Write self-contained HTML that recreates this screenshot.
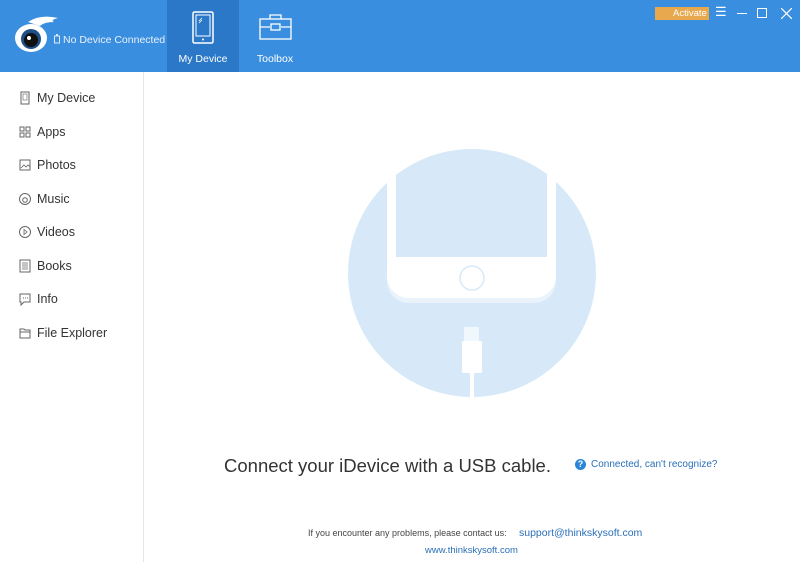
<!DOCTYPE html>
<html><head><style>
*{margin:0;padding:0;box-sizing:border-box}
body{width:800px;height:562px;overflow:hidden;background:#fff;font-family:"Liberation Sans",sans-serif;position:relative}
.hdr{position:absolute;left:0;top:0;width:800px;height:72px;background:#3a8ee0}
.tab{position:absolute;top:0;height:72px;width:72px;color:#fff;font-size:10.5px;text-align:center}
.side{position:absolute;left:0;top:72px;width:144px;height:490px;border-right:1px solid #e6e6e6}
.it{position:absolute;left:19px;font-size:12.5px;color:#333;display:flex;align-items:center}
.it svg{margin-right:6px}
</style></head><body>
<div class="hdr">
<svg style="position:absolute;left:10px;top:14px" width="52" height="40" viewBox="0 0 52 40">
<path d="M18 8 Q30 0 48 4 Q40 6 44 8 Q34 8 30 12Z" fill="#fff"/>
<ellipse cx="21" cy="24" rx="16" ry="14" fill="#fff"/>
<circle cx="21" cy="25" r="10" fill="#1e4f86"/>
<circle cx="21" cy="26" r="7" fill="#111"/>
<circle cx="19" cy="24" r="2" fill="#fff"/>
</svg>
<svg style="position:absolute;left:53px;top:33px" width="8" height="12" viewBox="0 0 8 12"><rect x="1.5" y="3" width="5" height="7" fill="none" stroke="#dbe9f8"/><rect x="3" y="1" width="2" height="2" fill="#dbe9f8"/></svg>
<div style="position:absolute;left:63px;top:34px;color:#e8f1fb;font-size:10.5px">No Device Connected</div>
<div class="tab" style="left:167px;background:#2b78c8">
<svg style="position:absolute;left:25px;top:11px" width="22" height="33" viewBox="0 0 22 33"><rect x="1" y="1" width="20" height="31" rx="1.5" fill="none" stroke="#fff" stroke-width="1.5"/><rect x="4" y="4" width="14" height="21" fill="none" stroke="#fff" stroke-width="1"/><circle cx="11" cy="28.5" r="1" fill="#fff"/><path d="M7 10l3-3M7 12l3-3" stroke="#fff" stroke-width=".8"/></svg>
<div style="position:absolute;top:53px;width:72px">My Device</div></div>
<div class="tab" style="left:239px">
<svg style="position:absolute;left:20px;top:13px" width="33" height="27" viewBox="0 0 33 27"><rect x="1" y="6" width="31" height="20" fill="none" stroke="#fff" stroke-width="1.3"/><path d="M11 6V2h11v4M1 14h10M22 14h10" fill="none" stroke="#fff" stroke-width="1.3"/><rect x="12" y="11" width="9" height="6" fill="none" stroke="#fff" stroke-width="1.3"/></svg>
<div style="position:absolute;top:53px;width:72px">Toolbox</div></div>
<div style="position:absolute;left:655px;top:7px;width:54px;height:13px;background:#e7a84e;color:#fff;font-size:9.5px;line-height:13px;padding-left:18px">Activate</div>
<div style="position:absolute;left:715px;top:4px;color:#fff;font-size:13px">☰</div>
<div style="position:absolute;left:737px;top:13px;width:10px;height:1px;background:#fff"></div>
<div style="position:absolute;left:757px;top:8px;width:10px;height:10px;border:1.3px solid #fff"></div>
<svg style="position:absolute;left:781px;top:8px" width="11" height="11"><path d="M0 0L11 11M11 0L0 11" stroke="#fff" stroke-width="1.2"/></svg>
</div>
<div class="side">
<div class="it" style="top:19px"><svg width="12" height="14"><rect x="2" y="1" width="8" height="12" fill="none" stroke="#666"/><rect x="4" y="3" width="4" height="6" fill="none" stroke="#666" stroke-width=".6"/></svg>My Device</div>
<div class="it" style="top:53px"><svg width="12" height="14"><rect x="1" y="2" width="4" height="4" fill="none" stroke="#666"/><rect x="7" y="2" width="4" height="4" fill="none" stroke="#666"/><rect x="1" y="8" width="4" height="4" fill="none" stroke="#666"/><rect x="7" y="8" width="4" height="4" fill="none" stroke="#666"/></svg>Apps</div>
<div class="it" style="top:86px"><svg width="12" height="14"><rect x="1" y="2" width="10" height="10" fill="none" stroke="#666"/><path d="M2 10l3-3 2 2 2-2 2 2" fill="none" stroke="#666" stroke-width=".8"/></svg>Photos</div>
<div class="it" style="top:120px"><svg width="12" height="14"><circle cx="6" cy="7" r="5.5" fill="none" stroke="#666"/><circle cx="6" cy="8" r="2.3" fill="none" stroke="#666"/></svg>Music</div>
<div class="it" style="top:153px"><svg width="12" height="14"><circle cx="6" cy="7" r="5.5" fill="none" stroke="#666"/><path d="M5 4.5v5l3-2.5z" fill="none" stroke="#666" stroke-width=".8"/></svg>Videos</div>
<div class="it" style="top:187px"><svg width="12" height="14"><rect x="1" y="1" width="10" height="12" fill="none" stroke="#666"/><path d="M3 4h6M3 6h6M3 8h6M3 10h6" stroke="#666" stroke-width=".8"/></svg>Books</div>
<div class="it" style="top:220px"><svg width="12" height="14"><path d="M1 2h10v8H5l-3 3v-3H1z" fill="none" stroke="#666"/><path d="M4 6h1M6 6h1M8 6h1" stroke="#666"/></svg>Info</div>
<div class="it" style="top:254px"><svg width="12" height="14"><path d="M1 3h4l1 1h5v8H1z" fill="none" stroke="#666"/><path d="M1 6h10" stroke="#666"/></svg>File Explorer</div>
</div>
<svg style="position:absolute;left:340px;top:140px" width="270" height="270" viewBox="340 140 270 270">
<defs><clipPath id="c"><circle cx="472" cy="273" r="124"/></clipPath></defs>
<circle cx="472" cy="273" r="124" fill="#d7e9f8"/>
<g clip-path="url(#c)">
<path d="M387 140V281a22 22 0 0 0 22 22h125a22 22 0 0 0 22-22V140z" fill="#eaf3fb"/>
<path d="M387 140V276a22 22 0 0 0 22 22h125a22 22 0 0 0 22-22V140z" fill="#fff"/>
<rect x="396" y="140" width="151" height="117" fill="#d7e9f8"/>
<circle cx="472" cy="278" r="12" fill="none" stroke="#d7e9f8" stroke-width="1.5"/>
<rect x="464" y="327" width="15" height="14" fill="#f0f7fd"/>
<rect x="462" y="341" width="20" height="32" rx="2" fill="#fff"/>
<rect x="470" y="372" width="4" height="30" fill="#fff"/>
</g>
</svg>
<div style="position:absolute;left:224px;top:455px;font-size:18.5px;color:#333">Connect your iDevice with a USB cable.</div>
<div style="position:absolute;left:575px;top:459px;width:11px;height:11px;border-radius:50%;background:#2a87d8;color:#fff;font-size:9px;text-align:center;line-height:11px;font-weight:bold">?</div>
<div style="position:absolute;left:591px;top:459px;font-size:10px;color:#2a6fb8">Connected, can't recognize?</div>
<div style="position:absolute;left:308px;top:528px;font-size:9px;color:#444">If you encounter any problems, please contact us:</div>
<div style="position:absolute;left:519px;top:527px;font-size:10.5px;color:#2a6fb8">support@thinkskysoft.com</div>
<div style="position:absolute;left:425px;top:545px;font-size:9.5px;color:#2a6fb8">www.thinkskysoft.com</div>
</body></html>
